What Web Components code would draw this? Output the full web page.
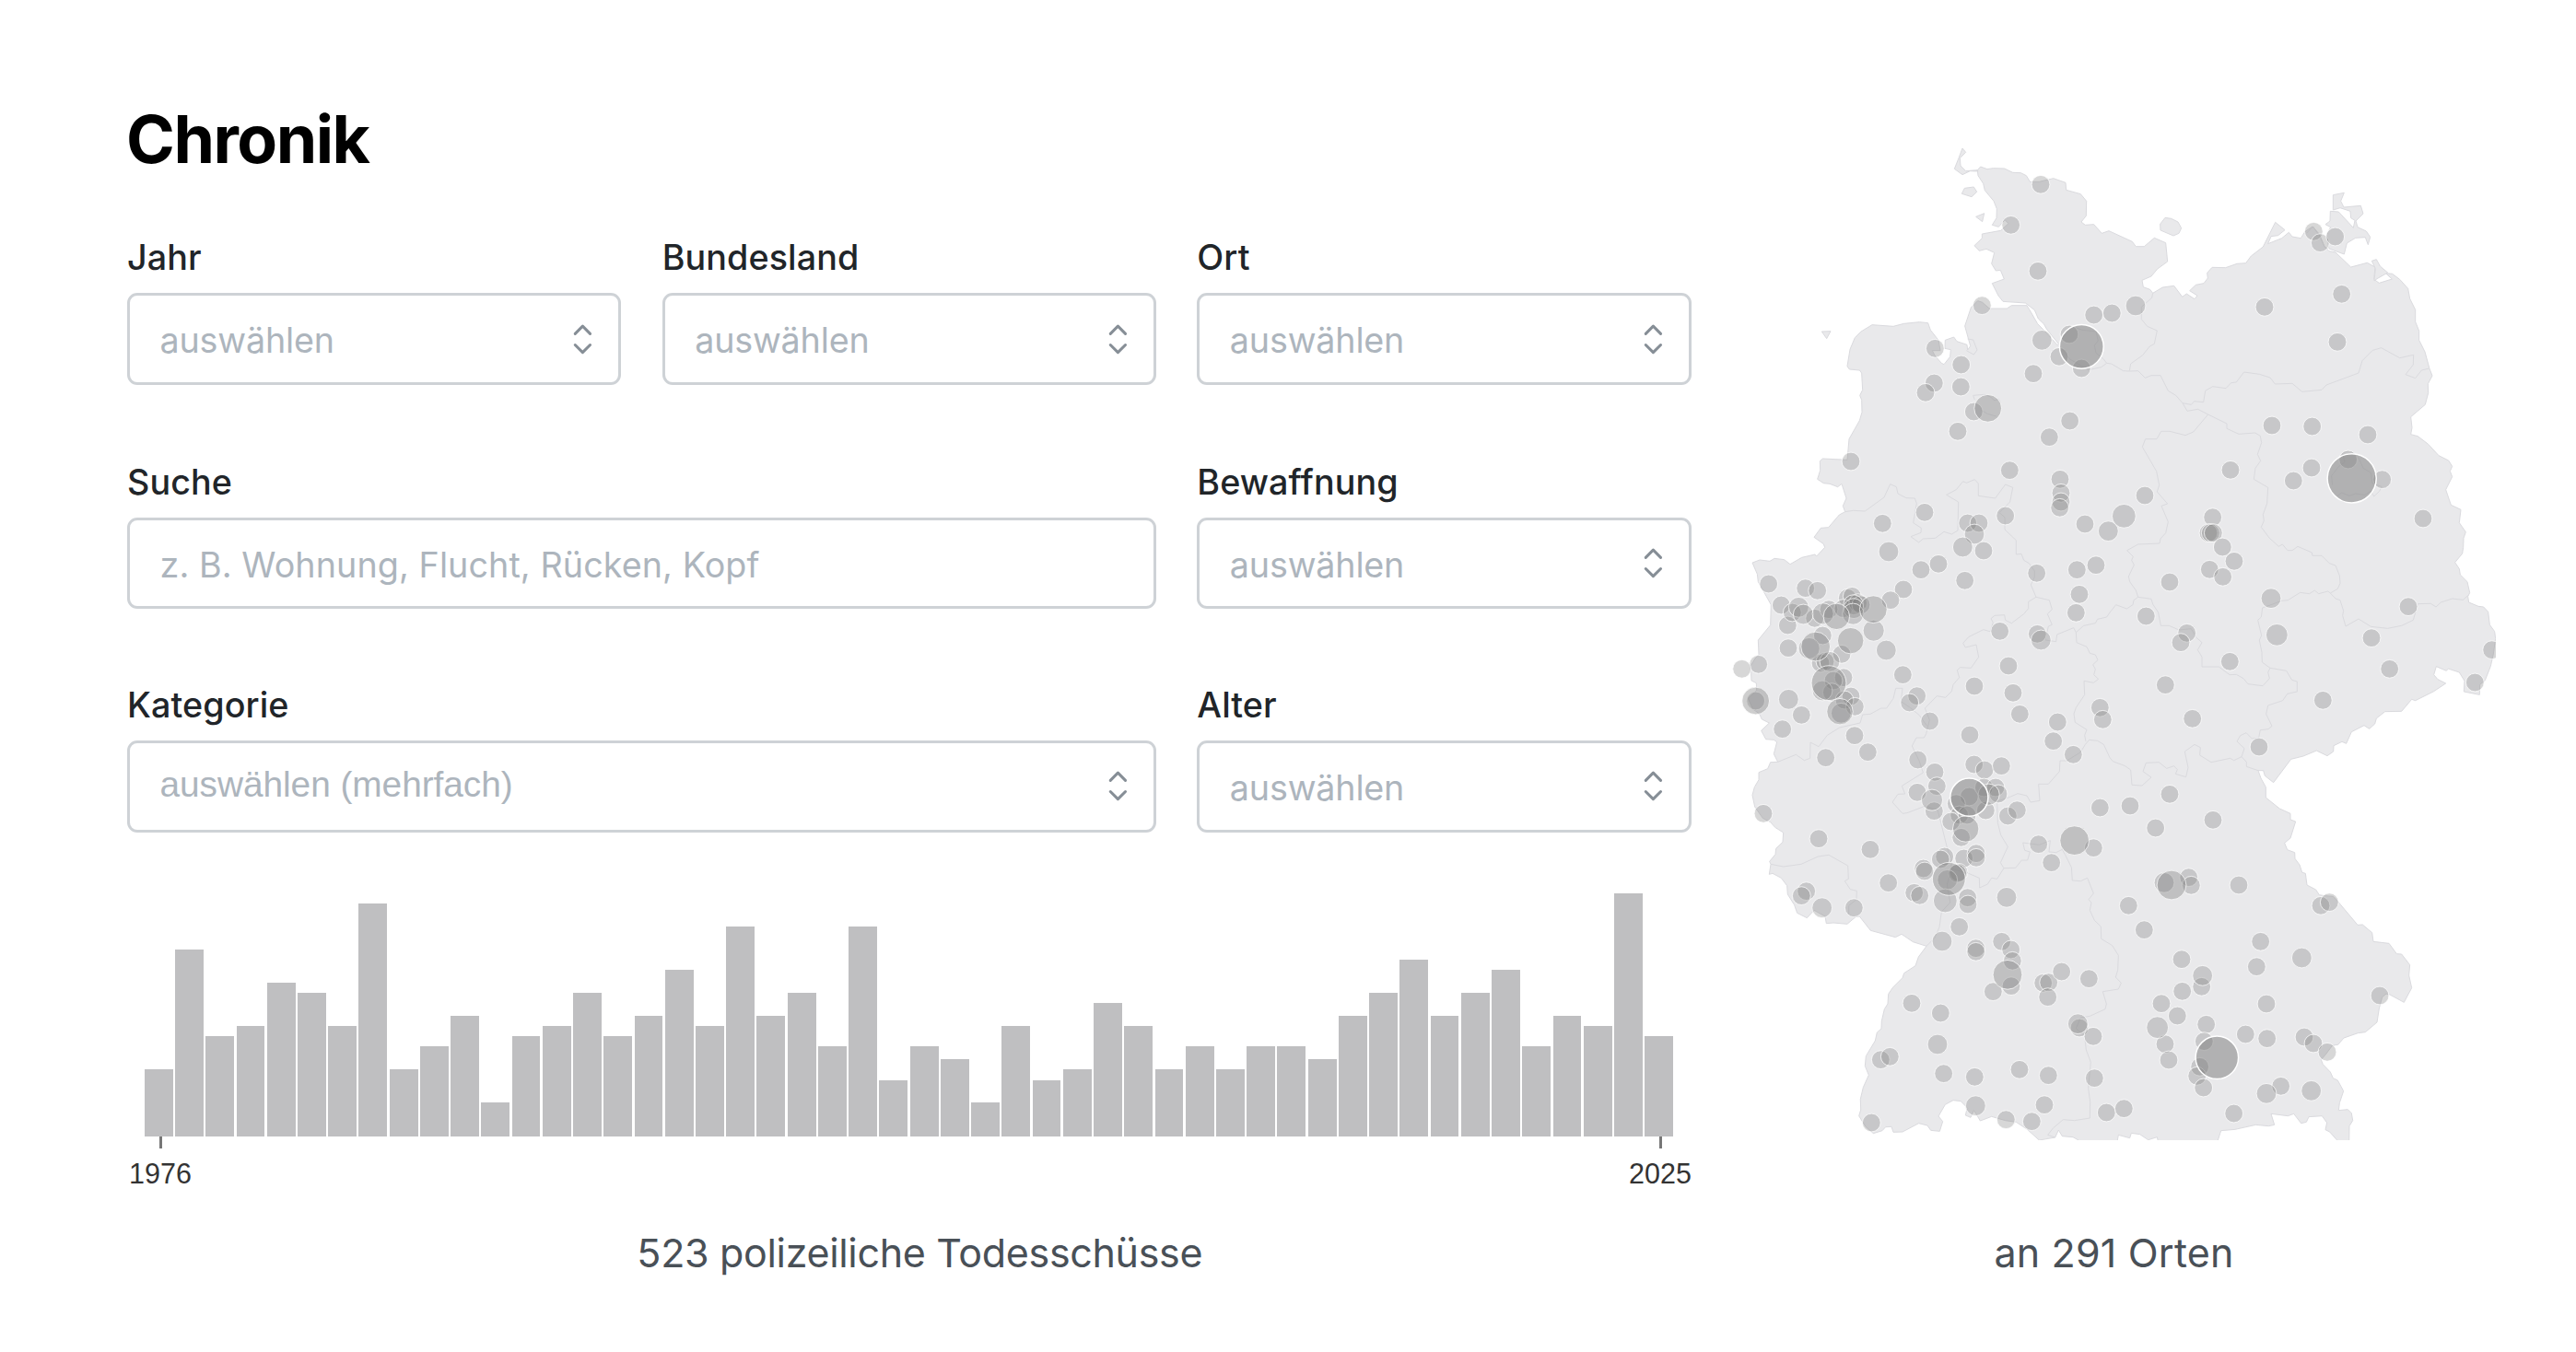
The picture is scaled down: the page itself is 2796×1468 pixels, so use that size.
<!DOCTYPE html>
<html lang="de">
<head>
<meta charset="utf-8">
<title>Chronik</title>
<style>
  body { margin: 0; background: #fff; font-family: Inter, "Liberation Sans", sans-serif; color: #212529; }
</style>
</head>
<body>
<chronik-page></chronik-page>
<script>
class BaseElement extends HTMLElement {
  render(html) {
    const t = document.createElement('template');
    t.innerHTML = html;
    this.attachShadow({ mode: 'open' }).appendChild(t.content.cloneNode(true));
  }
}

/* Label with a boxed control below it */
customElements.define('form-field', class extends BaseElement {
  connectedCallback() {
    const select = this.hasAttribute('select');
    this.render(`
      <style>
        :host { display: flex; flex-direction: column; min-width: 0; }
        :host([wide]) { grid-column: span 2; }
        label { font-size: 37.7px; line-height: 50px; font-weight: 500; letter-spacing: .1px; color: #212529; margin-bottom: 14.4px; white-space: nowrap; }
        .box { display: flex; align-items: center; justify-content: space-between; box-sizing: border-box; height: 99.5px;
          border: 3px solid #ced2d6; border-radius: 11px; padding: 0 14px 0 32.5px; background: #fff; }
        .value { font-size: 37.7px; line-height: 50px; letter-spacing: -.18px; color: #adb5bd; padding-top: 2px; white-space: nowrap; }
        :host(:not([select])) .value { letter-spacing: .08px; }
        :host([multi]) .value { font-family: "Liberation Sans", sans-serif; font-size: 38.85px; letter-spacing: -.05px; padding: 0 0 3px; }
        svg { width: 48.8px; height: 48.8px; display: block; }
      </style>
      <label>${this.getAttribute('label')}</label>
      <div class="box">
        <span class="value"><slot></slot></span>
        ${select ? `<svg viewBox="0 0 24 24" fill="none" stroke="#868e96" stroke-width="1.5" stroke-linecap="round" stroke-linejoin="round"><path d="M8 9l4-4l4 4M16 15l-4 4l-4-4"/></svg>` : ''}
      </div>`);
  }
});

/* Bar chart of cases per year */
customElements.define('year-chart', class extends BaseElement {
  connectedCallback() {
    const values = this.getAttribute('values').split(',').map(Number);
    const px = 2.775;
    const bars = values.map(v => `<i style="height:${(Math.round(v * 11.97 / px) * px).toFixed(1)}px"></i>`).join('');
    this.render(`
      <style>
        :host { display: block; }
        .bars { display: flex; align-items: flex-end; gap: 2.4px; height: 264px; padding: 0 19.3px 0 18.8px; }
        i { flex: 1; background: #bfbfc1; }
        .axis { display: flex; justify-content: space-between; margin: 0 -.5px 0 2px; }
        .tick { display: flex; flex-direction: column; align-items: center; width: 68px;
          font: 30.5px/36px "Liberation Sans", sans-serif; color: #333; }
        .tick::before { content: ""; width: 3px; height: 13.5px; background: #777; margin-bottom: 8.8px; }
      </style>
      <div class="bars">${bars}</div>
      <div class="axis"><span class="tick">${this.getAttribute('from')}</span><span class="tick">${this.getAttribute('to')}</span></div>`);
  }
});

/* Map sheets: each holds coordinates relative to its own corner */
const SHEETS = { A: [0, 0], B: [1260, 0], C: [0, 1200], D: [1260, 1200], E: [0, 2160], F: [1260, 2160] };
const path = (src, close) => {
  let off = SHEETS.A, pts = [];
  for (const tok of src.trim().split(/\s+/)) {
    if (SHEETS[tok]) { off = SHEETS[tok]; continue; }
    const [x, y] = tok.split(',').map(Number);
    pts.push((x + off[0]) + ' ' + (y + off[1]));
  }
  return 'M' + pts.join('L') + (close ? 'Z' : '');
};

const LAND = [
`A 829,134 839,123 861,131 880,128 917,129 944,142 970,143 988,152 1000,172 1030,172 1060,165 1076,161 1116,175 1118,199 1165,212 1184,235 1183,283 1167,303 1180,313 1208,311 1234,340 1257,332
B 73,367 85,383 112,383 145,355 182,371 188,432 155,456 135,480 105,493 109,515 131,523 140,535 172,516 209,511 236,547 250,537 276,554 285,543 260,527 280,508 306,503 319,486 317,469 333,451 377,452 414,439 443,437 460,414 499,384 539,304 570,329 548,347 525,350 515,374 560,356 583,337 594,351 622,356 635,335 660,318 680,340 698,382 714,398 735,402 785,450 838,436 864,450 860,490 877,502 919,489 898,470 920,472 944,490 971,520 977,553 995,589 995,628 1007,658 1007,688 1026,726 1041,781 1050,804 1036,830 1037,860 1027,898 980,938 984,973 980,995 1003,1001 1037,1027 1071,1064 1103,1080 1115,1099 1108,1115 1115,1133 1094,1175 1111,1225 1143,1240
D 1138,83 1159,113 1152,133 1151,163 1148,183 1124,212 1138,233 1141,252 1164,275 1172,311 1166,323 1169,342 1200,355 1217,357 1232,373 1237,415 1253,437 1256,460 1249,510 1240,550 1222,596 1205,610 1204,643 1153,633 1155,598 1138,570 1102,558 1096,565 1063,551 1055,578 1068,593 1094,606 1055,632 995,662 983,658 950,697 896,698 868,720 863,738 845,754 828,743 787,764 770,802 756,796 729,809 728,828 708,842 673,825 630,843 590,853 533,929 505,907 500,890 483,890 492,915 508,944 508,978 553,1014 588,1030 588,1050 605,1056 588,1110 569,1126 578,1148 602,1157
F 603,217 618,237 626,262 637,265 642,303 671,318 682,335 700,338 727,340 744,358 807,433 823,432 854,458 858,487 909,493 934,527 950,528 977,563 974,597 983,638 958,685 912,660 900,657 887,668 877,705 870,750 832,782 808,785 762,801 743,823 725,825 705,852 688,872 694,887 718,912 727,932 742,939 761,974 748,1013 745,1037 775,1034 787,1046 791,1070 780,1088 779,1150 755,1150 740,1134 716,1107 702,1100 707,1077 691,1055 648,1058 640,1075 623,1079 599,1048 580,1055 525,1048 536,1084 517,1088 475,1084 408,1099 362,1103 352,1134 348,1150 160,1150 154,1124 125,1133 98,1115 70,1111 65,1127 28,1117 22,1150
E 1170,1150 1158,1134 1140,1124 1105,1121 1093,1101 1082,1125 1030,1134 990,1098 955,1075 920,1070 875,1057 838,1071 826,1050 817,1037 807,1060 790,1053 793,1040 797,1030 775,1007 750,1004 724,1018 702,1056 716,1073 706,1105 677,1102 666,1086 638,1079 585,1107 555,1108 549,1090 530,1091 519,1103 490,1112 465,1090 443,1055 449,1035 448,1000 457,962 475,922 463,892 466,860 496,810 502,783 516,771 517,746 526,707 537,690 539,658 554,636 585,605 590,590 627,566 637,537 663,502 619,488 582,463 562,473 481,451 445,405 432,407 405,430 360,426 337,428 333,405 297,385 274,410 242,394 233,368 211,333 209,305 190,280 162,265 151,268 156,235 152,226 171,203 173,184 195,163 197,132 170,115 155,98 130,85
C 104,1008 96,970 103,944 117,920 117,896 146,884 155,863 179,862 166,836 176,797 166,790 140,788 125,760 151,735 127,723 119,705 98,690 82,655 110,628 109,605 93,597 92,575 90,550 105,525 117,512 115,465 155,416 157,350 115,275 112,250 96,213 120,204 153,208 168,199 200,203 219,218 257,196 300,186 305,192 332,163 328,152 297,130 319,100 344,98 379,57 398,47
A 391,1228 402,1203 387,1156 374,1166 348,1156 328,1154 308,1141 317,1112 316,1082 325,1074 405,1078 411,1010 445,950 453,923 452,883 446,868 455,850 452,795 445,786 412,783 405,773 414,718 430,680 450,660 486,638 555,643 590,634 640,629 668,632 676,655 702,688 708,722 682,722 690,738 712,763 720,767 740,742 742,719 723,715 724,688 752,678 762,692 795,703 797,720 806,707 788,642 808,582 830,560 845,565 868,585 925,585 940,575 990,575 1005,600 1025,635 1050,660 1090,705 1093,700 1055,653 1045,635 1027,618 1015,590 985,567 912,562 897,543 877,503 916,489 904,460 889,462 875,439 884,403 858,391 835,397 819,380 844,356 844,342 905,331 930,308 918,296 898,319 877,313 891,290 892,260 882,235 853,200 848,178 831,152`,
'A 780,63 791,76 772,95 774,120 791,137 829,134 831,138 805,137 780,149 754,130 768,95',
'A 787,193 817,189 827,205 810,221 778,211',
'A 824,286 851,275 845,302',
'A 322,660 351,659 338,683',
'B 180,289 200,292 222,303 233,323 225,340 207,348 165,330 164,310',
'B 727,215 763,208 752,235 762,255 817,250 825,276 801,300 807,320 835,333 848,352 841,377 832,353 800,355 772,372 763,408 714,390 706,345 719,320 702,311 717,300 718,268 745,270 793,322 798,298 785,290 783,268 750,257 727,264',
'B 853,430 868,425 880,447 905,468 870,488 861,495 865,455'
];

const BORDERS = [
'A 1095,705 1130,750 1190,785 1232,776 1250,763 1265,765 1304,788 B 64,789 92,788 115,811 135,803 165,803 190,853 215,868 237,893 265,898 275,887 305,890 311,853 335,839 378,845 395,827 412,825 437,792 487,799 522,810 538,831 594,829 626,856 690,850 705,834 810,795 822,755 856,721 884,713 944,746 989,736 988,768 963,800 995,812 1015,786 1040,780',
'A 1100,690 1130,640 1170,655 1215,660 1222,690 1210,705 1215,730 1240,750 1250,763',
'B 140,535 137,550 103,580 103,620 122,643 154,657 145,700 130,708 107,737 68,765 64,788',
'B 237,893 252,919 287,913 320,930 381,960 381,976 420,994 473,990 490,1000 494,1022 481,1060 491,1081 474,1105 469,1141 515,1168 512,1220 499,1256 502,1276 493,1297 D 520,133 550,160 562,153 579,173 594,173 612,160 658,180 660,190 690,190 715,215 735,222 748,255 750,280 742,298 718,312',
'B 320,930 272,987 246,998 195,985 167,985 153,1010 116,1010 106,1036 152,1115 161,1160 154,1182 188,1221 168,1228 190,1280 D 182,116 165,135 162,150 92,153 56,173 76,193 71,205 79,220 61,258 65,275 85,303 92,325 135,331 140,348 158,375 166,418 193,418 225,432 265,428 280,455 300,473 286,497 300,520 300,552 355,552 390,578 412,577 435,590 450,608 498,614 520,590 515,570 522,556 496,537 495,505 487,465 494,450 482,400 493,390 497,360 560,337 580,335 620,310 650,314 667,303 680,314 710,306 718,312 735,330 750,335 761,370 758,385 768,420 810,396 850,421 905,427 950,418 988,400 1003,347 1045,346 1062,357 1078,342 1115,330 1150,334 1166,320',
'D 522,556 575,565 593,595 610,600 610,633 578,640 563,662 515,678 509,706 528,745 516,755 490,758 485,783 463,786 444,767 425,776 414,795 438,818 429,845 404,857 392,850 330,863 293,840 295,815 276,805 244,828 255,880 248,911 214,901 220,887 209,875 185,883 160,863 118,865 108,893 135,912 105,939 72,937 68,888 50,875 10,860 0,848 C 1240,805 1220,793 1193,790 1180,805 1165,830 1120,858 1098,858 1096,893 1060,934 1028,934 1032,988 1002,993 990,972 960,965 930,978 893,990 895,1060 905,1100 928,1138 904,1190 E 915,248 953,247 973,222 992,222 1000,195 983,190 977,165 1030,172 1066,158 1062,195 1085,197 1105,187 1115,205 1135,245 1138,288 1165,290 1187,280 1207,330 1191,350 1200,360 1195,385 1210,418 1231,438 1232,478 1268,500 1288,532 1286,580 1279,603 1297,622 1288,642 1237,650 1249,690 1245,707 1195,730 1165,735 1150,770 1178,795 1183,840 1198,880 1190,965 1196,1010 1195,1062 1145,1070 1108,1067 1075,1095 1058,1117 1082,1125',
'D 429,845 445,862 445,877 483,890',
'D 92,325 78,335 75,350 55,363 20,350 0,375 C 1250,390 1220,397 1213,410 1175,418 1150,440 1142,425 1088,447 1085,470 1050,465 1060,420 1072,415 1057,380 1072,365 1063,335 1020,325 995,340 995,362 980,380 940,410 920,400 917,383 885,385 873,395 880,408 870,437 848,431 800,455 782,475 790,489 825,480 833,520 808,556 773,554 763,563 770,587 750,610 745,632 725,652 697,647 658,687 673,725 662,770 655,783 630,783 616,810 640,860 652,897 583,940 593,966 570,967 552,993 585,1030 600,1028 660,1005 700,1020 710,1060 730,1140 745,1190 E 740,270 730,300 740,360 712,390 705,440 690,475 663,502',
'C 1150,440 1152,473 1185,487 1195,508 1213,513 1221,530 1205,545 1213,560 1208,578 1223,592 1207,604 1176,598 1178,643 1150,685 1143,705 1147,733 1185,757 1178,775 1182,795',
'A 398,1247 425,1243 463,1245 525,1200 545,1157 565,1166 570,1188 597,1202 625,1203 631,1220 620,1283 646,1300 C 645,115 612,128 638,147 652,135 692,133 720,112 745,120 765,108 A 767,1215 728,1192 760,1175 782,1148 793,1153 820,1142 832,1155 832,1195 887,1203 920,1158 944,1168 935,1215 900,1250 918,1265 918,1305 C 955,140 955,186 972,184 980,205 997,215 1015,240 1015,260 1003,285 1020,325',
'C 179,862 238,838 265,857 284,850 285,798 312,812 340,775 380,750 447,735 455,708 480,706 515,687 533,687 555,655 563,622 585,622 580,665 610,685 640,710 665,745',
'A 820,882 815,868 850,865 870,872 885,885 898,880 904,890', 'A 840,915 862,928 890,936',
'A 797,684 815,687 828,720 817,735 793,722',
'B 725,1160 722,1130 745,1100 765,1085 758,1056 780,1048 800,1060 812,1075 825,1105 850,1120 855,1155 885,1165 878,1180 860,1197 850,1180 830,1192 800,1188 780,1195 755,1185 735,1200',
'B 685,350 700,385 710,390', 'B 640,340 662,318 680,345',
'E 156,235 197,243 255,235 310,210 345,205 407,240 409,283 397,290 415,317 436,322 435,350 410,370 410,400 430,407',
'E 745,250 800,265 835,280 836,312 862,300 875,280 893,283 915,248'
];

/* x,y[,radius] per sheet */
const PLACES = `
A 1035,181 938,313 1026,463 844,575 1208,606 1267,600 1039,688,32 1128,669 1168,709,71 1095,742 1168,780 1011,797 776,768 775,840 691,715 688,828 660,859 817,921 863,910,44 765,985 1130,951 1063,1004 417,1083 934,1112 1098,1141 1101,1186 1101,1215 1097,1234 520,1285 657,1249 920,1260 797,1284 834,1284 1179,1287 1255,1310,32 1306,1261,38
B 84,576,32 504,580 755,538 741,694 664,334 685,371 734,351 528,966 659,969 840,996 788,1138,79 776,1077 887,1142 657,1104 598,1146 393,1111 114,1194 1020,1269 335,1265
C 819,120,32 781,162,32 849,174 540,177,32 645,236 702,217 788,271 588,300 546,335 149,282 269,296 308,304 190,351 211,417 247,358,32 226,375 262,381,32 299,394 326,379,34 345,365 370,388,42 406,328 421,322 425,350,32 392,362 440,344 450,350 426,362,32 424,380,34 490,365,44 491,434,34 416,467,42 532,498,32 213,491 325,450 302,486,47 281,492,34 387,511 116,544 62,559 318,540 333,535 348,535,32 345,605,56 393,587 360,597 324,630,32 355,635 107,663,44 107,663 214,658,32 256,709 194,755 417,648 396,660 430,682 381,698,42 385,703,32 429,776 472,830 335,848 586,578 632,647 608,669 674,729 819,615 804,774 902,436 930,549 945,637 967,706 1022,247 1024,445 1036,465,32 1153,236 1215,221 1161,316 1150,376 1090,732 1076,794 1141,838 1228,685 1237,724 635,855 690,895 697,941 633,961 681,986,34 688,1022 818,870 852,888 907,875 802,977,61 802,975 850,945 888,945 866,968,34 897,966 760,998 856,1020 770,1035 795,1035 743,1056 791,1080,42 776,1108 928,1038 958,1019 1228,1011 1145,1118,47 1207,1142 1028,1130 1070,1190 312,1112 480,1147 132,1030
E 722,210 709,219 785,216 825,200 825,214 653,249 657,258 736,283,53 731,286,32 768,262 764,265 539,296 623,328 641,337 272,323 256,338 323,377,32 427,377 724,354,38 797,344 798,366 924,343,32 770,439 714,486,32 824,509 824,520 908,487 938,513 943,550 927,595,47 939,632 880,650 1043,622 1061,620 1058,668 1103,585 1192,608 1156,755,32 1161,768 1206,796 615,688 709,720 699,822,32 514,872 544,862 719,917 820,928 966,904 1060,923 1210,932 823,1022,32 922,1067 1006,1073 1047,1019 1249,1044 484,1077
D 321,116 328,116 337,116 367,162 405,208 325,235 368,259 195,276 118,387 251,442 231,473 391,535 525,329,32 544,448,35 852,458 911,559 972,356 1244,497 1189,603 694,661 269,721 181,611 486,813 66,1005 195,967 149,1077 336,1051
F 177,295,32 201,303,47 257,278 265,304 420,303 61,370 112,449 491,487 478,569 625,540,32 234,545 302,598,32 299,634 236,649 168,689 220,729 155,767,35 314,757 442,789 512,803 510,690 180,821 192,873 307,812 349,865,69 293,895 284,925 305,963 633,798 663,819 708,847 879,663 687,370 715,359 557,958 510,982,32 656,973,32 404,1047 46,1031`;

/* Germany with one circle per place, sized by number of cases */
customElements.define('places-map', class extends BaseElement {
  connectedCallback() {
    let off, spots = [];
    for (const tok of PLACES.trim().split(/\s+/)) {
      if (SHEETS[tok]) { off = SHEETS[tok]; continue; }
      const [x, y, r = 29] = tok.split(',').map(Number);
      spots.push([x + off[0], y + off[1], r + .7]);
    }
    spots.sort((a, b) => a[2] - b[2]);
    const alpha = r => r < 40 ? .3 : r < 50 ? .37 : r < 60 ? .4 : .51;
    this.render(`
      <style>
        :host { display: block; }
        svg { display: block; width: 829px; height: 1098px; overflow: hidden; }
      </style>
      <svg viewBox="30 0 2487 3294">
        <g fill="#e9e9eb" stroke="#dadade" stroke-width="3" stroke-linejoin="round">${LAND.map(p => `<path d="${path(p, true)}"/>`).join('')}</g>
        <g fill="none" stroke="#dadade" stroke-width="3" stroke-linejoin="round">${BORDERS.map(p => `<path d="${path(p)}"/>`).join('')}</g>
        <g fill="#7b7b7b" stroke="#fff" stroke-width="3">${spots.map(([x, y, r]) =>
          `<circle cx="${x}" cy="${y}" r="${r}" fill-opacity="${alpha(r)}" stroke-opacity="${r >= 60 ? 1 : .75}"${r >= 60 ? ' stroke-width="4.5"' : ''}/>`).join('')}</g>
      </svg>`);
  }
});

customElements.define('result-caption', class extends BaseElement {
  connectedCallback() {
    this.render(`
      <style>
        :host { display: block; text-align: center; font-size: 43px; line-height: 60px; color: #495057; white-space: nowrap; }
      </style><slot></slot>`);
  }
});

customElements.define('chronik-page', class extends BaseElement {
  connectedCallback() {
    this.render(`
      <style>
        :host { display: flex; box-sizing: border-box; width: 2796px; height: 1468px; padding: 105.5px 87px 0 138px; gap: 44.5px; overflow: hidden; }
        .main { width: 1697.5px; }
        h1 { margin: 0 0 58.4px -1px; font-size: 71.5px; line-height: 90px; font-weight: 700; letter-spacing: -1.5px; color: #000; }
        form { display: grid; grid-template-columns: repeat(3, 1fr); column-gap: 44.5px; row-gap: 79px; margin-bottom: 66px; }
        .second { margin: .8px 0 -.8px; }
        year-chart { margin-bottom: 38px; }
        .main result-caption { padding-left: 23px; letter-spacing: -.33px; }
        .side { padding-top: 34.5px; }
        .side result-caption { letter-spacing: .18px; }
        places-map { margin-bottom: 92px; }
      </style>
      <section class="main">
        <h1>Chronik</h1>
        <form>
          <form-field select label="Jahr">auswählen</form-field>
          <form-field select label="Bundesland">auswählen</form-field>
          <form-field select label="Ort">auswählen</form-field>
          <form-field class="second" wide label="Suche">z. B. Wohnung, Flucht, Rücken, Kopf</form-field>
          <form-field class="second" select label="Bewaffnung">auswählen</form-field>
          <form-field wide multi select label="Kategorie">auswählen (mehrfach)</form-field>
          <form-field select label="Alter">auswählen</form-field>
        </form>
        <year-chart from="1976" to="2025" values="6,17,9,10,14,13,10,21,6,8,11,3,9,10,13,9,11,15,10,19,11,13,8,19,5,8,7,3,10,5,6,12,10,6,8,6,8,8,7,11,13,16,11,13,15,8,11,10,22,9"></year-chart>
        <result-caption>523 polizeiliche Todesschüsse</result-caption>
      </section>
      <section class="side">
        <places-map></places-map>
        <result-caption>an 291 Orten</result-caption>
      </section>`);
  }
});
</script>
</body>
</html>
